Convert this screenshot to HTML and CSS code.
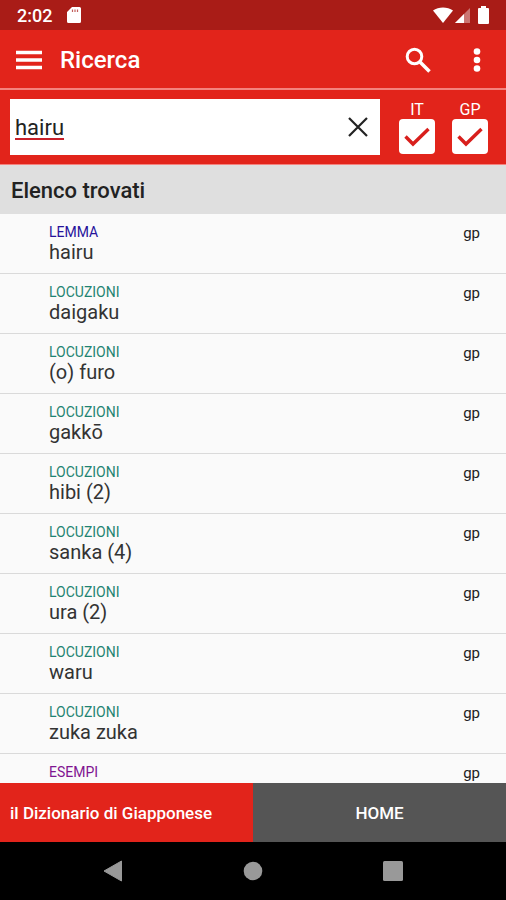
FILE: index.html
```html
<!DOCTYPE html>
<html lang="it">
<head>
<meta charset="utf-8">
<meta name="viewport" content="width=device-width, initial-scale=1">
<title>Ricerca</title>
<link rel="stylesheet" href="styles.css">
</head>
<body>
<div class="status">
  <span class="clock">2:02</span>
  <svg class="sd" width="14" height="16" viewBox="0 0 14 16"><path d="M5 0h7.500a1.500 1.500 0 0 1 1.500 1.500v13a1.500 1.500 0 0 1-1.500 1.500h-11A1.500 1.500 0 0 1 0 14.500V5z" fill="#fff"/><path d="M5.500 2.500v2.500M8 2.500v2.500M10.500 2.500v2.500" stroke="#a91c17" stroke-width="1.200" opacity=".7"/></svg>
  <svg class="signals" width="58" height="18" viewBox="0 0 58 18"><path d="M0 4.500C5.500.5 14.500.5 20 4.500L10 17z" fill="#fff"/><path d="M37 2v15H22z" fill="#fff" opacity=".4"/><path d="M31 8v9h-9z" fill="#fff"/><path d="M48 2V0h5v2h2q1 0 1 1v14q0 1-1 1h-9q-1 0-1-1V3q0-1 1-1z" fill="#fff"/></svg>
</div>
<header class="toolbar">
  <button class="icon-button menu" aria-label="Menu"><svg width="26" height="20" viewBox="0 0 26 20"><path d="M0 2.500h26M0 10h26M0 17.500h26" stroke="#fff" stroke-width="3.600"/></svg></button>
  <h1>Ricerca</h1>
  <button class="icon-button" aria-label="Cerca"><svg width="26" height="26" viewBox="0 0 26 26" fill="none" stroke="#fff"><circle cx="9.500" cy="9.500" r="7.300" stroke-width="3"/><path d="M15 15l9.500 9.500" stroke-width="3.600"/></svg></button>
  <button class="icon-button more" aria-label="Altro"><svg width="8" height="24" viewBox="0 0 8 24" fill="#fff"><circle cx="4" cy="3.500" r="3.300"/><circle cx="4" cy="12" r="3.300"/><circle cx="4" cy="20.500" r="3.300"/></svg></button>
</header>
<form class="search">
  <div class="field">
    <input type="text" value="hairu" aria-label="Testo da cercare" spellcheck="false">
    <button type="button" class="icon-button" aria-label="Cancella"><svg width="20" height="20" viewBox="0 0 20 20"><path d="M1 1l18 18M19 1L1 19" stroke="#222" stroke-width="2.200"/></svg></button>
  </div>
  <label class="check">IT
    <span class="box"><input type="checkbox" checked><svg width="26" height="20" viewBox="0 0 26 20"><path d="M1.500 9.500l7.500 7.500L24.500 2" fill="none" stroke="#d81f1c" stroke-width="3.400"/></svg></span>
  </label>
  <label class="check">GP
    <span class="box"><input type="checkbox" checked><svg width="26" height="20" viewBox="0 0 26 20"><path d="M1.500 9.500l7.500 7.500L24.500 2" fill="none" stroke="#d81f1c" stroke-width="3.400"/></svg></span>
  </label>
</form>
<h2>Elenco trovati</h2>
<ul class="results">
  <li><div><p class="kind lemma">LEMMA</p><p class="word">hairu</p></div><span class="dict">gp</span></li>
  <li><div><p class="kind">LOCUZIONI</p><p class="word">daigaku</p></div><span class="dict">gp</span></li>
  <li><div><p class="kind">LOCUZIONI</p><p class="word">(o) furo</p></div><span class="dict">gp</span></li>
  <li><div><p class="kind">LOCUZIONI</p><p class="word">gakkō</p></div><span class="dict">gp</span></li>
  <li><div><p class="kind">LOCUZIONI</p><p class="word">hibi (2)</p></div><span class="dict">gp</span></li>
  <li><div><p class="kind">LOCUZIONI</p><p class="word">sanka (4)</p></div><span class="dict">gp</span></li>
  <li><div><p class="kind">LOCUZIONI</p><p class="word">ura (2)</p></div><span class="dict">gp</span></li>
  <li><div><p class="kind">LOCUZIONI</p><p class="word">waru</p></div><span class="dict">gp</span></li>
  <li><div><p class="kind">LOCUZIONI</p><p class="word">zuka zuka</p></div><span class="dict">gp</span></li>
  <li><div><p class="kind esempi">ESEMPI</p></div><span class="dict">gp</span></li>
</ul>
<div class="tabs">
  <button class="brand">il Dizionario di Giapponese</button>
  <button class="home">HOME</button>
</div>
<nav class="system">
  <button class="icon-button" aria-label="Indietro"><svg width="20" height="22" viewBox="0 0 20 22"><path d="M18.500 1v20L1 11z" fill="#999" stroke="#999" stroke-linejoin="round"/></svg></button>
  <button class="icon-button" aria-label="Schermata iniziale"><svg width="20" height="20" viewBox="0 0 20 20"><circle cx="10" cy="10" r="9.300" fill="#999"/></svg></button>
  <button class="icon-button" aria-label="Recenti"><svg width="20" height="20" viewBox="0 0 20 20"><rect width="20" height="20" rx="1.500" fill="#999"/></svg></button>
</nav>
</body>
</html>
```
FILE: styles.css
```css
* { box-sizing: border-box; margin: 0; padding: 0; }
body {
  display: flex;
  flex-direction: column;
  height: 100vh;
  overflow: hidden;
  background: #fafafa;
  color: #222;
  font-family: Roboto, sans-serif;
}
button, input { border: 0; background: none; font: inherit; color: inherit; }
svg { display: block; }
.icon-button { display: flex; align-items: center; justify-content: center; }

.status {
  display: flex;
  align-items: center;
  height: 30px;
  flex: none;
  padding: 0 15px 0 17px;
  background: #a91c17;
  color: #fff;
}
.clock { font-size: 18px; font-weight: 500; line-height: 30px; padding-top: 2px; }
.sd { margin-left: 15px; }
.signals { margin-left: auto; }

.toolbar {
  display: flex;
  align-items: center;
  height: 60px;
  flex: none;
  padding: 2px 25px 0 16px;
  border-bottom: 2px solid #f4827e;
  background: #e2241b;
  color: #fff;
}
.toolbar h1 { flex: 1; margin-left: 18px; font-size: 24px; font-weight: 500; line-height: 32px; }
.menu { width: 26px; }
.more { width: 8px; margin-left: 42px; }

.search {
  display: flex;
  height: 75px;
  flex: none;
  padding: 9px 18px 9px 10px;
  border-bottom: 1px solid #f4827e;
  background: #e2241b;
}
.field {
  display: flex;
  flex: 1;
  min-width: 0;
  height: 56px;
  margin-right: 19px;
  padding: 0 12px 0 5px;
  background: #fff;
}
.field input {
  flex: 1;
  min-width: 0;
  outline: 0;
  font-size: 22px;
  text-decoration: underline 2px #c8202a;
  text-underline-offset: 3px;
}
.check {
  width: 36px;
  padding-top: 3px;
  color: #fff;
  font-size: 16px;
  line-height: 16px;
  text-align: center;
}
.check + .check { margin-left: 17px; }
.box {
  display: grid;
  place-items: center;
  height: 35px;
  margin-top: 1px;
  border-radius: 4px;
  background: #fff;
}
.box > * { grid-area: 1 / 1; }
.box input { width: 100%; height: 100%; appearance: none; }
.box svg { pointer-events: none; }

h2 {
  flex: none;
  height: 49px;
  padding-left: 11px;
  background: #dfdfdf;
  font-size: 22px;
  font-weight: 500;
  line-height: 52px;
}

.results { flex: 1; min-height: 0; overflow: hidden; list-style: none; }
.results li {
  display: flex;
  justify-content: space-between;
  height: 60px;
  padding: 9px 26px 0 49px;
  border-bottom: 1px solid #dadada;
}
.kind { color: #1f8472; font-size: 14px; line-height: 18px; }
.lemma { color: #26129a; }
.esempi { color: #801591; }
.word { color: #333; font-size: 20px; line-height: 22px; }
.dict { font-size: 15px; line-height: 20px; }

.tabs {
  display: grid;
  grid-template-columns: 1fr 1fr;
  flex: none;
  height: 59px;
  color: #fff;
  font-size: 17px;
  font-weight: 500;
}
.brand { padding-left: 10px; background: #e2241b; text-align: left; }
.home { background: #555; }

.system {
  display: flex;
  align-items: center;
  justify-content: center;
  gap: 120px;
  flex: none;
  height: 58px;
  background: #000;
}
.system button { flex: none; width: 20px; }
```
